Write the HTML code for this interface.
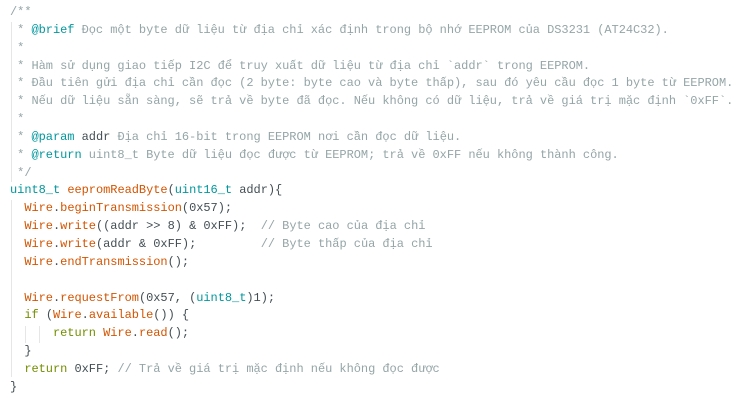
<!DOCTYPE html>
<html><head><meta charset="utf-8"><style>
html,body{margin:0;padding:0;background:#fff;width:752px;height:404px;overflow:hidden}
pre{margin:0;position:absolute;left:10px;top:4px;font-family:"Liberation Mono","DejaVu Sans Mono",monospace;font-size:12px;line-height:17.85px;color:#434f54;letter-spacing:-0.04px}
.c{color:#95a5a6}.k{color:#00979d}.t{color:#00979d}.f{color:#d35400}.r{color:#728e00}.d{color:#434f54}
.g{position:absolute;width:1px;background:#e6e6e6}
</style></head><body>
<div class="g" style="left:11px;top:22px;height:160px"></div>
<div class="g" style="left:11px;top:200px;height:177px"></div>
<div class="g" style="left:25px;top:326px;height:17px"></div>
<div class="g" style="left:39px;top:326px;height:17px"></div>
<pre><span class="c">/**
 * <span class="k">@brief</span> Đọc một byte dữ liệu từ địa chỉ xác định trong bộ nhớ EEPROM của DS3231 (AT24C32).
 *
 * Hàm sử dụng giao tiếp I2C để truy xuất dữ liệu từ địa chỉ `addr` trong EEPROM.
 * Đầu tiên gửi địa chỉ cần đọc (2 byte: byte cao và byte thấp), sau đó yêu cầu đọc 1 byte từ EEPROM.
 * Nếu dữ liệu sẵn sàng, sẽ trả về byte đã đọc. Nếu không có dữ liệu, trả về giá trị mặc định `0xFF`.
 *
 * <span class="k">@param</span> <span class="d">addr</span> Địa chỉ 16-bit trong EEPROM nơi cần đọc dữ liệu.
 * <span class="k">@return</span> uint8_t Byte dữ liệu đọc được từ EEPROM; trả về 0xFF nếu không thành công.
 */</span>
<span class="t">uint8_t</span> <span class="f">eepromReadByte</span>(<span class="t">uint16_t</span> addr){
  <span class="f">Wire</span>.<span class="f">beginTransmission</span>(0x57);
  <span class="f">Wire</span>.<span class="f">write</span>((addr &gt;&gt; 8) &amp; 0xFF);  <span class="c">// Byte cao của địa chỉ</span>
  <span class="f">Wire</span>.<span class="f">write</span>(addr &amp; 0xFF);         <span class="c">// Byte thấp của địa chỉ</span>
  <span class="f">Wire</span>.<span class="f">endTransmission</span>();

  <span class="f">Wire</span>.<span class="f">requestFrom</span>(0x57, (<span class="t">uint8_t</span>)1);
  <span class="r">if</span> (<span class="f">Wire</span>.<span class="f">available</span>()) {
      <span class="r">return</span> <span class="f">Wire</span>.<span class="f">read</span>();
  }
  <span class="r">return</span> 0xFF; <span class="c">// Trả về giá trị mặc định nếu không đọc được</span>
}</pre>
</body></html>
